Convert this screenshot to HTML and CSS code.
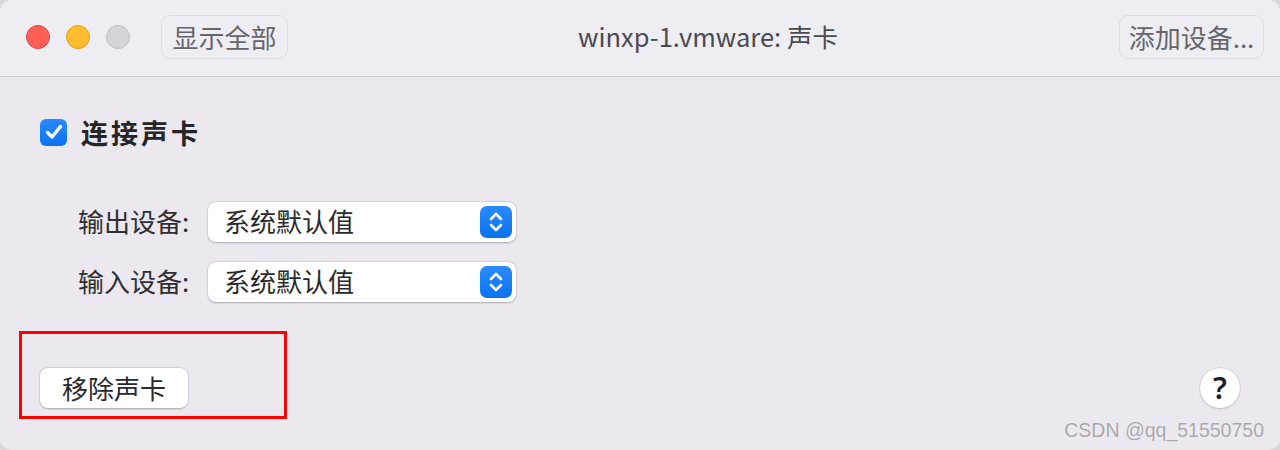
FILE: index.html
```html
<!DOCTYPE html>
<html lang="zh">
<head>
<meta charset="utf-8">
<link rel="stylesheet" href="styles.css">
</head>
<body>
<div class="window">
  <header class="titlebar">
    <div class="lights">
      <span class="light red"></span>
      <span class="light yellow"></span>
      <span class="light gray"></span>
    </div>
    <button class="tb-btn show-all">显示全部</button>
    <div class="title">winxp-1.vmware: 声卡</div>
    <button class="tb-btn add">添加设备...</button>
  </header>
  <main class="content">
    <label class="check-row">
      <span class="checkbox">
        <svg width="20" height="18" viewBox="0 0 20 18"><path d="M3.5 9.5 L8 14 L16.5 3.5" fill="none" stroke="#fff" stroke-width="3.4" stroke-linecap="round" stroke-linejoin="round"/></svg>
      </span>
      <span class="check-label">连接声卡</span>
    </label>
    <div class="form">
      <div class="row">
        <span class="row-label">输出设备:</span>
        <div class="popup">
          <span class="popup-text">系统默认值</span>
          <span class="stepper">
            <svg width="20" height="28" viewBox="0 0 20 28"><path d="M5 11 L10 6 L15 11 M5 17 L10 22 L15 17" fill="none" stroke="#fff" stroke-width="2.6" stroke-linecap="round" stroke-linejoin="round"/></svg>
          </span>
        </div>
      </div>
      <div class="row">
        <span class="row-label">输入设备:</span>
        <div class="popup">
          <span class="popup-text">系统默认值</span>
          <span class="stepper">
            <svg width="20" height="28" viewBox="0 0 20 28"><path d="M5 11 L10 6 L15 11 M5 17 L10 22 L15 17" fill="none" stroke="#fff" stroke-width="2.6" stroke-linecap="round" stroke-linejoin="round"/></svg>
          </span>
        </div>
      </div>
    </div>
    <div class="footer">
      <button class="remove-btn">移除声卡</button>
      <button class="help-btn">?</button>
    </div>
    <div class="annotation"></div>
    <div class="watermark">CSDN @qq_51550750</div>
  </main>
</div>
</body>
</html>
```

FILE: styles.css
```css
* { box-sizing: border-box; }
html, body {
  margin: 0;
  padding: 0;
  width: 1280px;
  height: 450px;
  overflow: hidden;
  background: #d9d8dc;
  font-family: "Noto Sans CJK SC", "Noto Sans", sans-serif;
}
.window {
  width: 1280px;
  height: 450px;
  border-radius: 12px;
  overflow: hidden;
  background: #ebe8ef;
  display: flex;
  flex-direction: column;
  position: relative;
}
.titlebar {
  height: 77px;
  flex: none;
  background: #efedf4;
  border-bottom: 1px solid #cfcdd3;
  display: flex;
  align-items: center;
  padding: 0 16px 0 26px;
  position: relative;
}
.lights {
  display: flex;
  gap: 16px;
  margin-top: -2px;
}
.light {
  width: 24px;
  height: 24px;
  border-radius: 50%;
}
.light.red { background: #fe5f57; border: 1px solid #e2463f; }
.light.yellow { background: #febc2e; border: 1px solid #e1a116; }
.light.gray { background: #d6d4da; border: 1px solid #bfbdc3; }
.tb-btn {
  height: 44px;
  margin-top: -2px;
  border: 1.5px solid #dedce3;
  border-radius: 9px;
  background: #efedf4;
  color: #67656c;
  font-family: inherit;
  font-size: 26px;
  padding: 0;
  line-height: 40px;
  white-space: nowrap;
}
.show-all { margin-left: 31px; width: 127px; }
.add { margin-left: auto; width: 145px; }
.title {
  position: absolute;
  left: 0;
  right: 0;
  top: 0;
  height: 76px;
  line-height: 76px;
  text-align: center;
  font-size: 25.5px;
  color: #4b4a4f;
  pointer-events: none;
  padding-left: 136px;
  margin-top: -2px;
}
.content {
  flex: 1;
  position: relative;
  padding: 39px 40px 0 40px;
}
.check-row {
  display: flex;
  align-items: center;
  gap: 14px;
  height: 32px;
}
.checkbox {
  width: 27px;
  height: 27px;
  border-radius: 6px;
  background: linear-gradient(#2a8bff, #0a72f0);
  display: flex;
  align-items: center;
  justify-content: center;
}
.check-label {
  font-size: 27px;
  font-weight: 700;
  color: #252428;
  letter-spacing: 3px;
}
.form {
  display: flex;
  flex-direction: column;
  gap: 20px;
  margin-top: 54px;
  padding-left: 38px;
}
.row {
  display: flex;
  align-items: center;
  height: 40px;
}
.row-label {
  width: 130px;
  font-size: 26px;
  color: #2f2e32;
  margin-top: -4px;
}
.popup {
  width: 308px;
  height: 40px;
  background: #fff;
  border-radius: 8px;
  box-shadow: 0 0.5px 2px rgba(0,0,0,0.25), 0 0 0 0.5px rgba(0,0,0,0.06);
  display: flex;
  align-items: center;
  padding: 0 4px 0 16px;
}
.popup-text {
  flex: 1;
  font-size: 26px;
  color: #2a292d;
  margin-top: -4px;
}
.stepper {
  width: 32px;
  height: 32px;
  border-radius: 7px;
  background: linear-gradient(#2a8bff, #0a72f0);
  display: flex;
  align-items: center;
  justify-content: center;
}
.footer {
  display: flex;
  justify-content: space-between;
  align-items: center;
  margin-top: 66px;
}
.remove-btn {
  width: 148px;
  height: 40px;
  background: #fff;
  border: none;
  border-radius: 8px;
  box-shadow: 0 0.5px 2px rgba(0,0,0,0.28), 0 0 0 0.5px rgba(0,0,0,0.06);
  font-family: inherit;
  font-size: 26px;
  line-height: 36px;
  color: #2a292d;
  padding: 0;
}
.help-btn {
  width: 40px;
  height: 40px;
  border-radius: 50%;
  background: #fff;
  border: none;
  box-shadow: 0 0.5px 2px rgba(0,0,0,0.28), 0 0 0 0.5px rgba(0,0,0,0.06);
  font-family: "Noto Sans", sans-serif;
  font-size: 30px;
  font-weight: 600;
  color: #1f1e22;
  padding: 0;
  line-height: 40px;
}
.annotation {
  position: absolute;
  left: 19px;
  top: 254px;
  width: 268px;
  height: 88px;
  border: 3px solid #ff0000;
}
.watermark {
  position: absolute;
  right: 16px;
  bottom: 8px;
  font-family: "Liberation Sans", "Noto Sans", sans-serif;
  font-size: 19.5px;
  color: #a8a7ab;
  text-shadow: 0 0 1px #fff;
}
```
